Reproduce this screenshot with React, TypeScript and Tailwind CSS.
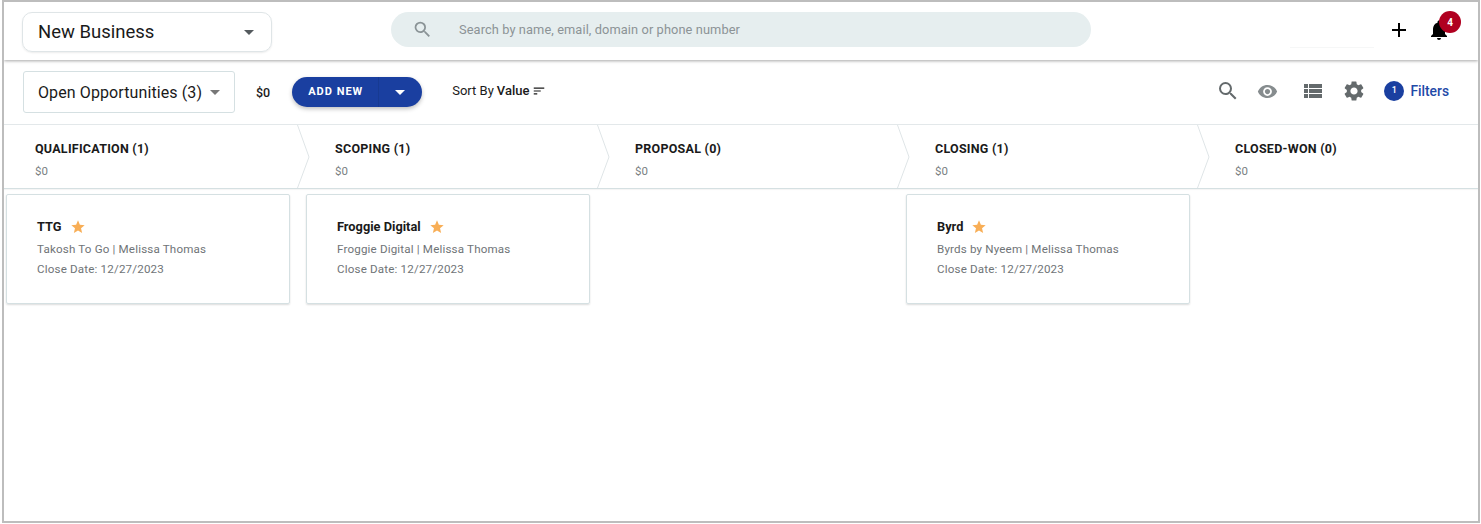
import { MdAdd, MdArrowDropDown, MdNotifications, MdSearch, MdSettings, MdSort, MdStar, MdViewList, MdVisibility } from "react-icons/md";

const stages = [
  { name: "QUALIFICATION (1)", deal: { title: "TTG", sub: "Takosh To Go | Melissa Thomas" } },
  { name: "SCOPING (1)", deal: { title: "Froggie Digital", sub: "Froggie Digital | Melissa Thomas" } },
  { name: "PROPOSAL (0)" },
  { name: "CLOSING (1)", deal: { title: "Byrd", sub: "Byrds by Nyeem | Melissa Thomas" } },
  { name: "CLOSED-WON (0)" },
];

function Chevron() {
  return (
    <svg className="absolute right-[-7px] top-0 z-10" width="13" height="63" viewBox="0 0 13 63" fill="none">
      <path d="M0.5 0 L12 32 L0.5 63" stroke="#dfe5e7" strokeWidth="1" />
    </svg>
  );
}

export default function App() {
  return (
    <div className="h-[524px] w-[1481px] bg-white font-['Roboto',sans-serif]">
      <div className="ml-[2px] flex h-[523px] w-[1478px] flex-col overflow-hidden border-2 border-[#bdbdbd]">
        <header className="relative z-20 flex h-[58px] shrink-0 items-start bg-white pl-[18px] pt-[10px] shadow-[0_1px_3px_rgba(0,0,0,0.35)]">
          <div className="flex h-10 w-[250px] items-center justify-between rounded-[10px] border border-[#dfe5e7] pl-[15px] pr-[10px] shadow-[0_1px_2px_rgba(0,0,0,0.08)]">
            <span className="text-[18.5px] leading-none text-[#1a1a1a]">New Business</span>
            <MdArrowDropDown className="text-[24px] text-[#555a5e]" />
          </div>
          <div className="ml-[119px] flex h-[35px] w-[700px] items-center rounded-[18px] bg-[#e6eeef] pl-[21px]">
            <MdSearch className="text-[21px] text-[#8a9396]" />
            <span className="ml-[26px] pt-px text-[12.8px] tracking-[0.1px] text-[#8c9396]">Search by name, email, domain or phone number</span>
          </div>
          <MdAdd className="ml-[296px] mt-[6px] text-[24px] text-black" />
          <div className="relative ml-[16px] mt-[6px]">
            <MdNotifications className="text-[24px] text-black" />
            <span className="absolute left-[12px] top-[-7px] flex h-[22px] w-[22px] items-center justify-center rounded-full bg-[#b00020] text-[10px] font-bold text-white">4</span>
          </div>
          <div className="absolute left-[1286px] top-[45px] h-px w-[84px] bg-[#f6f7f7]" />
        </header>

        <div className="flex h-[65px] shrink-0 items-start border-b border-[#e3e8ea] pl-[19px] pt-[11px]">
          <div className="flex h-[42px] w-[212px] items-center rounded-[3px] border border-[#d5e0e2] pl-[14px]">
            <span className="pt-[2px] text-[16px] tracking-[0.1px] text-[#1a1a1a]">Open Opportunities (3)</span>
            <MdArrowDropDown className="ml-[1px] text-[24px] text-[#777]" />
          </div>
          <span className="ml-[21px] mt-[13px] text-[12.5px] font-medium text-[#1a1a1a]">$0</span>
          <div className="ml-[22px] mt-[6px] flex h-[30px] w-[130px] items-center rounded-[15px] bg-[#1a3fa0] shadow-[0_2px_4px_rgba(0,0,0,0.25)]">
            <span className="flex h-full w-[87px] items-center justify-end border-r border-[#173a92] pr-[15px] text-[11px] font-bold tracking-[1px] text-white">ADD NEW</span>
            <MdArrowDropDown className="ml-[9px] text-[24px] text-white" />
          </div>
          <div className="ml-[30px] mt-[10px] flex items-center text-[13px] text-[#1a1a1a]">
            <span>Sort By</span>
            <span className="ml-[3px] font-medium">Value</span>
            <MdSort className="ml-[3px] text-[14px]" />
          </div>
          <div className="ml-auto mt-[8px] flex items-center pr-[29px] text-[#646a6c]">
            <MdSearch className="text-[24px]" />
            <MdVisibility className="ml-[17px] text-[21px] text-[#868c8e]" />
            <MdViewList className="ml-[23px] text-[24px]" />
            <MdSettings className="ml-[17px] text-[24px]" />
            <span className="ml-[18px] flex h-[20px] w-[20px] items-center justify-center rounded-full bg-[#1a3fa0] text-[9px] font-medium text-white">1</span>
            <span className="ml-[6px] text-[13.8px] font-medium text-[#1f4aa8]">Filters</span>
          </div>
        </div>

        <div className="-ml-px flex h-[64px] shrink-0 border-b border-[#d5e0e2] shadow-[0_1px_1px_rgba(0,0,0,0.04)]">
          {stages.map((stage, i) => (
            <div key={stage.name} className="relative w-[300px] shrink-0 pl-8 pt-[16px]">
              <div className="text-[12.5px] font-bold leading-[16px] tracking-[0.25px] text-[#1a1a1a]">{stage.name}</div>
              <div className="mt-[7px] text-[11.5px] leading-[14px] text-[#7a7f82]">$0</div>
              {i < 4 && <Chevron />}
            </div>
          ))}
        </div>

        <div className="flex flex-1 pl-[2px] pt-[5px]">
          {stages.map((stage) => (
            <div key={stage.name} className="w-[300px] shrink-0">
              {stage.deal && (
                <div className="flex h-[110px] w-[284px] flex-col rounded-[2px] border border-[#d5e0e2] pl-[30px] pt-[24px] shadow-[0_1px_2px_rgba(0,0,0,0.14)]">
                  <div className="flex h-4 items-center text-[12.8px] font-bold text-[#1a1a1a]">
                    <span>{stage.deal.title}</span>
                    <MdStar className="ml-[8px] text-[16px] text-[#f8ae56]" />
                  </div>
                  <div className="mt-[7px] text-[11.6px] leading-[14px] tracking-[0.17px] text-[#6f7477]">{stage.deal.sub}</div>
                  <div className="mt-[6px] text-[11.6px] leading-[14px] tracking-[0.17px] text-[#6f7477]">Close Date: 12/27/2023</div>
                </div>
              )}
            </div>
          ))}
        </div>
      </div>
    </div>
  );
}
